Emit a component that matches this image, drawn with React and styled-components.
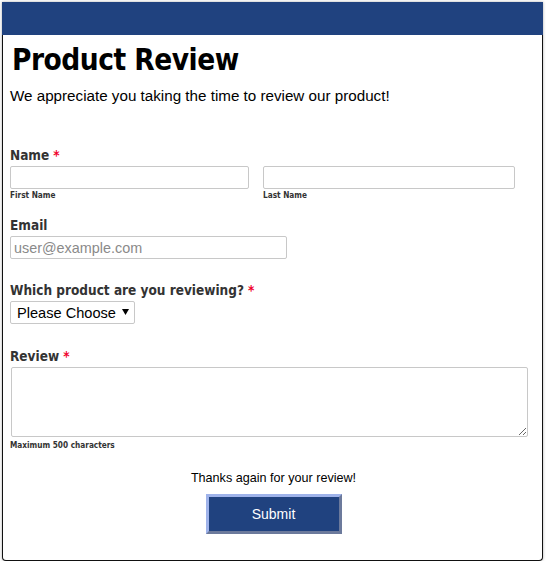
import React from "react";
import styled, { createGlobalStyle } from "styled-components";

const Global = createGlobalStyle`
  html, body { margin: 0; padding: 0; background: #fff; }
  body { font-family: "Liberation Sans", Arial, sans-serif; }
  * { box-sizing: border-box; }
`;

const Page = styled.div`
  padding: 2px 3px 0 2px;
`;

const Card = styled.div`
  width: 541px;
  height: 559px;
  border: 1px solid #111;
  border-top: none;
  border-radius: 0 0 4px 4px;
  box-shadow: 0 0 3px rgba(0, 0, 0, 0.35);
  background: #fff;
  display: flex;
  flex-direction: column;
`;

const Header = styled.div`
  height: 33px;
  background: #20427f;
  margin: 0 -1px;
`;

const Body = styled.div`
  padding: 0 7px;
  display: flex;
  flex-direction: column;
`;

const Title = styled.h1`
  margin: 7px 0 0 2px;
  font-family: "DejaVu Sans Condensed", "DejaVu Sans", sans-serif;
  font-stretch: condensed;
  font-weight: bold;
  font-size: 29.5px;
  letter-spacing: -0.5px;
  line-height: 36px;
  color: #000;
`;

const Intro = styled.p`
  margin: 9px 0 0;
  font-size: 15.2px;
  line-height: 18px;
  color: #000;
`;

const Field = styled.div`
  display: flex;
  flex-direction: column;
  margin-top: ${(p) => p.$top}px;
`;

const Label = styled.label`
  font-family: "DejaVu Sans Condensed", "DejaVu Sans", sans-serif;
  font-stretch: condensed;
  font-weight: bold;
  font-size: 13.5px;
  line-height: 16px;
  color: #333;
  margin-bottom: ${(p) => p.$gap}px;
`;

const Req = styled.span`
  color: #f0002a;
  margin-left: 4px;
`;

const NameRow = styled.div`
  display: flex;
  gap: 14px;
`;

const SubField = styled.div`
  display: flex;
  flex-direction: column;
  width: ${(p) => p.$w}px;
`;

const Input = styled.input`
  width: ${(p) => (p.$w ? `${p.$w}px` : "100%")};
  height: 23px;
  border: 1px solid #c8c8c8;
  border-radius: 2px;
  padding: 0 3px;
  font-family: "Liberation Sans", Arial, sans-serif;
  font-size: 14.4px;
  color: #000;
  background: #fff;
  outline: none;
  &::placeholder { color: #8a8a8a; }
`;

const Hint = styled.span`
  font-family: "DejaVu Sans Condensed", "DejaVu Sans", sans-serif;
  font-stretch: condensed;
  font-weight: bold;
  font-size: 8.2px;
  line-height: 10px;
  color: #333;
  margin-top: ${(p) => p.$top || 1}px;
`;

const SelectBox = styled.div`
  position: relative;
  width: 125px;
  height: 23px;
  border: 1px solid #c8c8c8;
  border-radius: 2px;
  background: #fff;
`;

const Select = styled.select`
  appearance: none;
  -webkit-appearance: none;
  border: none;
  background: transparent;
  width: 100%;
  height: 100%;
  padding: 0 0 0 6px;
  font-family: "Liberation Sans", Arial, sans-serif;
  font-size: 14.6px;
  color: #000;
  outline: none;
`;

const Arrow = styled.svg`
  position: absolute;
  right: 5px;
  top: 7px;
  pointer-events: none;
`;

const TextArea = styled.textarea`
  width: 517px;
  height: 70px;
  margin-left: 1px;
  border: 1px solid #c8c8c8;
  border-radius: 2px;
  resize: vertical;
  display: block;
  font-family: "Liberation Sans", Arial, sans-serif;
  font-size: 14px;
  outline: none;
`;

const Footer = styled.div`
  display: flex;
  flex-direction: column;
  align-items: center;
  margin-top: 20px;
  padding-left: 2px;
`;

const Thanks = styled.p`
  margin: 0;
  font-size: 12.6px;
  line-height: 16px;
  color: #000;
`;

const Submit = styled.button`
  margin-top: 8px;
  width: 136px;
  height: 40px;
  background: #20427f;
  color: #fff;
  font-family: "Liberation Sans", Arial, sans-serif;
  font-size: 14px;
  border-style: solid;
  border-width: 3px;
  border-color: #9fb3ea #6c7a9c #6c7a9c #9fb3ea;
  cursor: pointer;
`;

export default function App() {
  return (
    <Page>
      <Global />
      <Card>
        <Header />
        <Body>
          <Title>Product Review</Title>
          <Intro>We appreciate you taking the time to review our product!</Intro>

          <Field $top={42}>
            <Label $gap={3}>
              Name<Req>*</Req>
            </Label>
            <NameRow>
              <SubField $w={239}>
                <Input />
                <Hint>First Name</Hint>
              </SubField>
              <SubField $w={252}>
                <Input />
                <Hint>Last Name</Hint>
              </SubField>
            </NameRow>
          </Field>

          <Field $top={17}>
            <Label $gap={3}>Email</Label>
            <Input $w={277} placeholder="user@example.com" />
          </Field>

          <Field $top={23}>
            <Label $gap={3}>
              Which product are you reviewing?<Req>*</Req>
            </Label>
            <SelectBox>
              <Select defaultValue="">
                <option value="">Please Choose</option>
              </Select>
              <Arrow width="7" height="6" viewBox="0 0 7 6">
                <path d="M0 0 H7 L3.5 6 Z" fill="#000" />
              </Arrow>
            </SelectBox>
          </Field>

          <Field $top={24}>
            <Label $gap={3}>
              Review<Req>*</Req>
            </Label>
            <TextArea />
            <Hint $top={3}>Maximum 500 characters</Hint>
          </Field>
        </Body>
        <Footer>
          <Thanks>Thanks again for your review!</Thanks>
          <Submit>Submit</Submit>
        </Footer>
      </Card>
    </Page>
  );
}
